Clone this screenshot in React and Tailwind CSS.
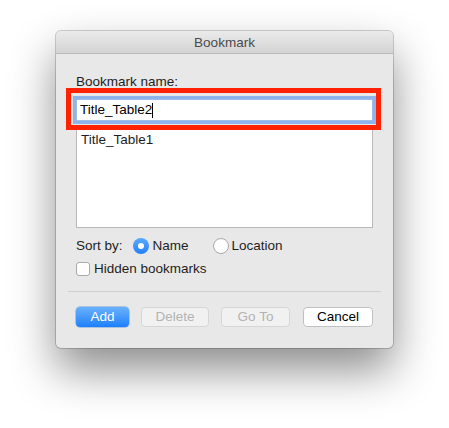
import React from "react";

export default function App() {
  const font = { fontFamily: '"Liberation Sans", Arial, sans-serif' };
  return (
    <div className="w-[449px] h-[428px] bg-white overflow-hidden pl-[56px] pt-[31px]" style={font}>
      <div className="relative w-[337px] rounded-[5px] bg-[#e8e8e8] shadow-[0_22px_45px_rgba(0,0,0,0.45),0_0_0_1px_rgba(0,0,0,0.18)]">
        {/* Title bar */}
        <div className="h-[23px] rounded-t-[5px] bg-gradient-to-b from-[#ebebeb] to-[#d3d3d3] border-b border-[#b9b9b9] flex items-center justify-center pt-[2px]">
          <span className="text-[13.5px] leading-[16px] text-[#4a4a4a]">Bookmark</span>
        </div>
        {/* Body */}
        <div className="px-[20px] pt-[20px] pb-[21px] flex flex-col">
          <div className="text-[13.5px] leading-[16px] text-[#1e1e1e]">Bookmark name:</div>
          <div className="mt-[9px] h-[22px] bg-white border border-[#9ebde8] shadow-[0_0_0_3px_#8fb3ec] flex items-center px-[3px]">
            <span className="text-[13.5px] leading-[16px] text-black">Title_Table2</span>
            <span className="w-px h-[15px] bg-black"></span>
          </div>
          <div className="mt-[6px] h-[101px] bg-white border border-[#b9b9b9] pt-[4px] pl-[4px]">
            <div className="text-[13.5px] leading-[16px] text-[#1e1e1e]">Title_Table1</div>
          </div>
          <div className="mt-[10px] h-[16px] flex items-center text-[13.5px] leading-[16px] text-[#1e1e1e]">
            <span>Sort by:</span>
            <span className="ml-[10px] w-[16px] h-[16px] rounded-full bg-gradient-to-b from-[#5aaafd] to-[#1f7ffb] flex items-center justify-center">
              <span className="w-[6px] h-[6px] rounded-full bg-white"></span>
            </span>
            <span className="ml-[4px]">Name</span>
            <span className="ml-[24px] w-[16px] h-[16px] rounded-full bg-white border border-[#a9a9a9]"></span>
            <span className="ml-[3px]">Location</span>
          </div>
          <div className="mt-[7px] h-[16px] flex items-center text-[13.5px] leading-[16px] text-[#1e1e1e]">
            <span className="w-[14px] h-[14px] rounded-[3px] bg-white border border-[#a9a9a9]"></span>
            <span className="ml-[4px]">Hidden bookmarks</span>
          </div>
          <div className="mt-[14px] -mx-[8px] h-px bg-[#cfcfcf]"></div>
          <div className="mt-[15px] flex gap-[12px] text-[13.5px] leading-[16px]">
            <div className="w-[53px] h-[20px] rounded-[4px] bg-gradient-to-b from-[#69b1fb] to-[#1b7ffb] text-white flex items-center justify-center shadow-[0_0_0_0.5px_rgba(0,80,200,0.5)]">Add</div>
            <div className="w-[68px] h-[20px] rounded-[4px] bg-[#f1f1f1] border border-[#d6d6d6] text-[#b3b3b3] flex items-center justify-center">Delete</div>
            <div className="w-[69px] h-[20px] rounded-[4px] bg-[#f1f1f1] border border-[#d6d6d6] text-[#b3b3b3] flex items-center justify-center">Go To</div>
            <div className="ml-auto w-[70px] h-[20px] rounded-[4px] bg-white border border-[#c1c1c1] text-black flex items-center justify-center">Cancel</div>
          </div>
        </div>
        {/* Red annotation */}
        <div className="absolute left-[10px] top-[57px] w-[315px] h-[42px] border-[5px] border-[#ff2200]"></div>
      </div>
    </div>
  );
}
